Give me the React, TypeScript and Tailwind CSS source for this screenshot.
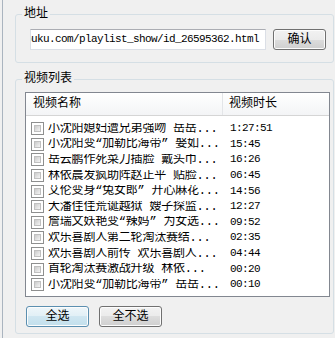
const videos = [
  { name: "小沈阳媳妇遭兄弟强吻 岳岳...", time: "1:27:51" },
  { name: "小沈阳变“加勒比海带” 娶如...", time: "15:45" },
  { name: "岳云鹏作死菜刀插脸 戴头巾...", time: "16:26" },
  { name: "林依晨发疯助阵赵正平 贴脸...", time: "06:45" },
  { name: "艾伦变身“兔女郎” 开心麻花...", time: "14:56" },
  { name: "大潘佳佳荒诞越狱 嫂子探监...", time: "12:27" },
  { name: "詹瑞文妖艳变“辣妈” 为女选...", time: "09:52" },
  { name: "欢乐喜剧人第二轮淘汰赛结...", time: "02:35" },
  { name: "欢乐喜剧人前传 欢乐喜剧人...", time: "04:44" },
  { name: "首轮淘汰赛激战升级  林依...", time: "00:20" },
  { name: "小沈阳变“加勒比海带” 岳岳...", time: "00:10" },
];

const btn =
  "h-[21px] rounded-[3px] border text-[12px] leading-none flex items-center justify-center shadow-[inset_0_0_0_1px_#fcfcfc]";
const grayBtn =
  "border-[#707070] bg-[linear-gradient(to_bottom,#f2f2f2_0%,#ebebeb_50%,#dddddd_50%,#cfcfcf_100%)]";

function Checkbox() {
  return (
    <div className="w-[13px] h-[13px] shrink-0 border border-[#8e8f8f] bg-white p-[2px]">
      <div className="w-full h-full bg-[linear-gradient(135deg,#cbcbcb,#f4f4f4)] border border-[#c0c0c0]" />
    </div>
  );
}

export default function App() {
  return (
    <div className="w-[335px] h-[338px] bg-[#f0f0f0] pl-[2px] overflow-hidden text-black font-['Liberation_Mono','Noto_Sans_CJK_SC',monospace]">
      <div className="h-full border-l border-[#aab4bf] pl-[12px] pt-[14px]">
        {/* 地址 */}
        <div className="relative w-[319px] h-[49px] border border-[#d5dfe5] rounded-[3px] pl-[14px] pt-[14px]">
          <span className="absolute left-[6px] top-[-8px] px-[2px] bg-[#f0f0f0] text-[12px] leading-[14px]">
            地址
          </span>
          <div className="flex gap-[7px]">
            <div className="w-[236px] h-[21px] bg-white border border-[#dbdfe6] border-t-[#abadb3] flex items-center justify-end overflow-hidden pr-[6px]">
              <span className="whitespace-nowrap text-[11px] tracking-[-0.6px] leading-none">
                http://www.youku.com/playlist_show/id_26595362.html
              </span>
            </div>
            <button className={`${btn} ${grayBtn} w-[53px]`}>确认</button>
          </div>
        </div>

        {/* 视频列表 */}
        <div className="relative mt-[16px] w-[319px] h-[255px] border border-[#d5dfe5] rounded-[3px] pl-[9px] pt-[12px]">
          <span className="absolute left-[6px] top-[-8px] px-[2px] bg-[#f0f0f0] text-[12px] leading-[14px]">
            视频列表
          </span>
          <div className="w-[305px] h-[205px] border border-[#828790] bg-white">
            <div className="flex h-[23px] border-b border-[#d5d5d5] bg-[linear-gradient(to_bottom,#ffffff,#f3f4f6)] text-[12px]">
              <div className="w-[197px] pl-[7px] flex items-center border-r border-[#e3e5e8]">视频名称</div>
              <div className="flex-1 pl-[6px] flex items-center">视频时长</div>
            </div>
            <div className="pt-[5px]">
              {videos.map((v) => (
                <div key={v.name + v.time} className="h-[15.6px] flex items-center pl-[5px]">
                  <Checkbox />
                  <div className="ml-[4px] w-[182px] whitespace-nowrap overflow-hidden text-[12px] leading-none tracking-[-0.2px]">
                    {v.name}
                  </div>
                  <div className="text-[11px] tracking-[-0.6px] leading-none">{v.time}</div>
                </div>
              ))}
            </div>
          </div>
          <div className="flex gap-[10px] mt-[9px] ml-[1px]">
            <button
              className={`${btn} w-[63px] border-[#5b8fb0] shadow-[inset_0_0_0_1px_#e8f6fc] bg-[linear-gradient(to_bottom,#eef6fa_0%,#e1eff6_50%,#cfe6f1_50%,#c2dfec_100%)]`}
            >
              全选
            </button>
            <button className={`${btn} ${grayBtn} w-[63px]`}>全不选</button>
          </div>
        </div>
      </div>
    </div>
  );
}
